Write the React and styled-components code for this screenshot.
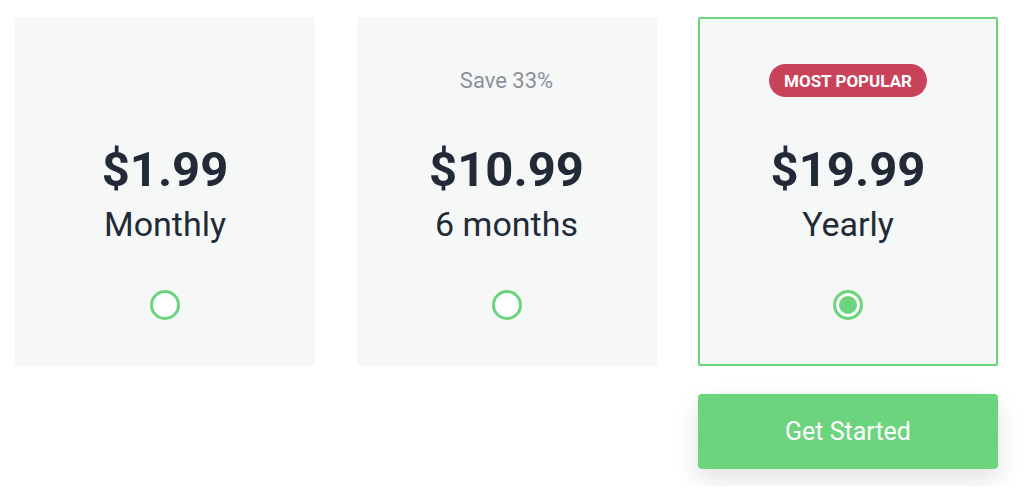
import React, { useState } from "react";
import styled, { createGlobalStyle } from "styled-components";

const GlobalStyle = createGlobalStyle`
  body {
    margin: 0;
    background: #ffffff;
    font-family: Roboto, "Liberation Sans", sans-serif;
    color: #222a37;
  }
`;

const plans = [
  { id: "monthly", price: "$1.99", period: "Monthly" },
  { id: "half", price: "$10.99", period: "6 months", note: "Save 33%" },
  { id: "yearly", price: "$19.99", period: "Yearly", badge: "Most Popular" },
];

const App = () => {
  const [selected, setSelected] = useState("yearly");

  return (
    <Page>
      <GlobalStyle />
      <Grid>
        {plans.map((plan) => (
          <Card
            key={plan.id}
            $active={selected === plan.id}
            onClick={() => setSelected(plan.id)}
          >
            <TopSlot>
              {plan.note && <Note>{plan.note}</Note>}
              {plan.badge && <Badge>{plan.badge}</Badge>}
            </TopSlot>
            <Price>{plan.price}</Price>
            <Period>{plan.period}</Period>
            <Radio $active={selected === plan.id} />
          </Card>
        ))}
        <ButtonCell>
          <Button>Get Started</Button>
        </ButtonCell>
      </Grid>
    </Page>
  );
};

const Page = styled.div`
  padding: 17px 15px;
`;

const Grid = styled.div`
  display: grid;
  grid-template-columns: repeat(3, 300px);
  column-gap: 41.5px;
  row-gap: 28px;
`;

const Card = styled.div`
  box-sizing: border-box;
  height: 349px;
  background: #f6f8f8;
  border: 2px solid ${(p) => (p.$active ? "#6dd47e" : "transparent")};
  border-radius: 2px;
  display: flex;
  flex-direction: column;
  align-items: center;
  cursor: pointer;
`;

const TopSlot = styled.div`
  margin-top: 45px;
  height: 33px;
  display: flex;
  align-items: center;
  justify-content: center;
`;

const Note = styled.span`
  font-size: 22px;
  color: #8c9097;
`;

const Badge = styled.span`
  height: 33px;
  padding: 0 15px;
  display: flex;
  align-items: center;
  border-radius: 17px;
  background: #c8435a;
  color: #ffffff;
  font-size: 17px;
  font-weight: 700;
  text-transform: uppercase;
`;

const Price = styled.div`
  margin-top: 48.5px;
  font-size: 49px;
  line-height: 48px;
  font-weight: 700;
`;

const Period = styled.div`
  margin-top: 13px;
  font-size: 34px;
  line-height: 34px;
`;

const Radio = styled.span`
  box-sizing: border-box;
  margin-top: 49.5px;
  width: 30px;
  height: 30px;
  border-radius: 50%;
  border: 3px solid #6dd47e;
  background: ${(p) => (p.$active ? "#6dd47e" : "#ffffff")};
  box-shadow: ${(p) => (p.$active ? "inset 0 0 0 3px #ffffff" : "none")};
`;

const ButtonCell = styled.div`
  grid-column: 3;
`;

const Button = styled.button`
  width: 100%;
  height: 75px;
  border: none;
  border-radius: 4px;
  background: #6dd47e;
  color: #ffffff;
  font-family: Roboto, "Liberation Sans", sans-serif;
  font-size: 25px;
  box-shadow: 0 10px 24px rgba(0, 0, 0, 0.12);
  cursor: pointer;
`;

export default App;
